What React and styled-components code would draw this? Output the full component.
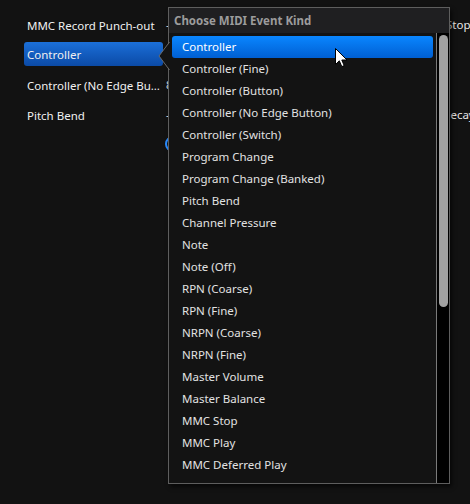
import React from 'react';
import styled, {createGlobalStyle} from 'styled-components';

const GlobalStyle = createGlobalStyle`
html, body {
margin: 0;
padding: 0;
background: #121212;
font-family: "Noto Sans", "Open Sans", sans-serif;
font-size: 11.5px;
color: #e6e6e6;
}
`;

const Page = styled.div`
position: relative;
width: 470px;
height: 504px;
overflow: hidden;
padding-top: 9px;
box-sizing: border-box;
`;

const Rows = styled.div`
display: flex;
flex-direction: column;
padding-left: 24px;
`;

const Row = styled.div`
display: grid;
grid-template-columns: 139px 3px 280px 40px;
align-items: center;
height: 30px;
line-height: 32px;
`;

const NameCell = styled.div`
height: 24px;
line-height: 26px;
padding-left: 3px;
border-radius: 3px;
white-space: nowrap;
overflow: hidden;
text-overflow: ellipsis;
color: #f0f0f0;
background: ${p => p.$selected ? 'linear-gradient(#1b6fd8, #0b4aa6)' : 'transparent'};
`;

const ValueCell = styled.div`
white-space: nowrap;
color: #e6e6e6;
margin-left: ${p => p.$shift || 0}px;
`;

const Knob = styled.div`
width: 16px;
height: 16px;
border-radius: 50%;
border: 2px solid #2a8cff;
box-sizing: border-box;
margin-left: -1px;
`;

const Popup = styled.div`
position: absolute;
left: 168px;
top: 7px;
width: 282px;
height: 477px;
box-sizing: border-box;
border: 1px solid #5e5e5e;
background: #131313;
display: flex;
flex-direction: column;
box-shadow: 2px 3px 4px rgba(0, 0, 0, 0.6);
`;

const Callout = styled.svg`
position: absolute;
left: -11px;
top: 34px;
`;

const Header = styled.div`
height: 25px;
line-height: 26px;
padding-left: 5px;
background: #1f1f21;
color: #9c9c9c;
font-weight: 700;
flex-shrink: 0;
`;

const Body = styled.div`
flex: 1;
display: flex;
min-height: 0;
`;

const List = styled.div`
flex: 1;
padding: 3px 3px 0 3px;
overflow: hidden;
`;

const Item = styled.div`
height: 22px;
line-height: 22px;
padding-left: 10px;
border-radius: 3px;
white-space: nowrap;
color: ${p => p.$selected ? '#ffffff' : '#e2e2e2'};
background: ${p => p.$selected ? 'linear-gradient(#0a86ff, #005fd2)' : 'transparent'};
`;

const Track = styled.div`
width: 13px;
flex-shrink: 0;
border-left: 1px solid #7a7a7a;
background: #000;
padding: 2px 2px 0 2px;
box-sizing: border-box;
`;

const Thumb = styled.div`
width: 9px;
height: 272px;
border-radius: 5px;
background: #a2a2a2;
`;

const Cursor = styled.svg`
position: absolute;
left: 335px;
top: 48px;
`;

const rows = [
    {name: 'MMC Record Punch-out', value: '-', extra: 'Stop', shift: 0},
    {name: 'Controller', value: '', selected: true},
    {name: 'Controller (No Edge Button)', value: '8'},
    {name: 'Pitch Bend', value: '-', extra: 'Decay', shift: -4},
];

const kinds = [
    'Controller',
    'Controller (Fine)',
    'Controller (Button)',
    'Controller (No Edge Button)',
    'Controller (Switch)',
    'Program Change',
    'Program Change (Banked)',
    'Pitch Bend',
    'Channel Pressure',
    'Note',
    'Note (Off)',
    'RPN (Coarse)',
    'RPN (Fine)',
    'NRPN (Coarse)',
    'NRPN (Fine)',
    'Master Volume',
    'Master Balance',
    'MMC Stop',
    'MMC Play',
    'MMC Deferred Play',
    'MMC Fast Forward',
    'MMC Rewind',
];

export default function App() {
    return (
        <Page>
            <GlobalStyle/>
            <Rows>
                {rows.map((r, i) => (
                    <Row key={i}>
                        <NameCell $selected={r.selected}>{r.name}</NameCell>
                        <span/>
                        <ValueCell>{r.value}</ValueCell>
                        <ValueCell $shift={r.shift}>{r.extra}</ValueCell>
                    </Row>
                ))}
                <Row>
                    <span/>
                    <span/>
                    <Knob/>
                </Row>
            </Rows>

            <Popup>
                <Callout width="12" height="28" viewBox="0 0 12 28">
                    <path d="M12 0 L1 14 L12 28 Z" fill="#131313"/>
                    <path d="M11.5 0 L1 14 L11.5 28" fill="none" stroke="#6a6a6a" strokeWidth="1"/>
                </Callout>
                <Header>Choose MIDI Event Kind</Header>
                <Body>
                    <List>
                        {kinds.map((k, i) => (
                            <Item key={k} $selected={i === 0}>{k}</Item>
                        ))}
                    </List>
                    <Track>
                        <Thumb/>
                    </Track>
                </Body>
            </Popup>

            <Cursor width="13" height="20" viewBox="0 0 13 20">
                <path d="M0.5 0.5 L0.5 16.5 L4.3 12.8 L6.8 18.6 L9.2 17.6 L6.8 12 L12 12 Z"
                      fill="#fff" stroke="#000" strokeWidth="1" strokeLinejoin="round"/>
            </Cursor>
        </Page>
    );
}
